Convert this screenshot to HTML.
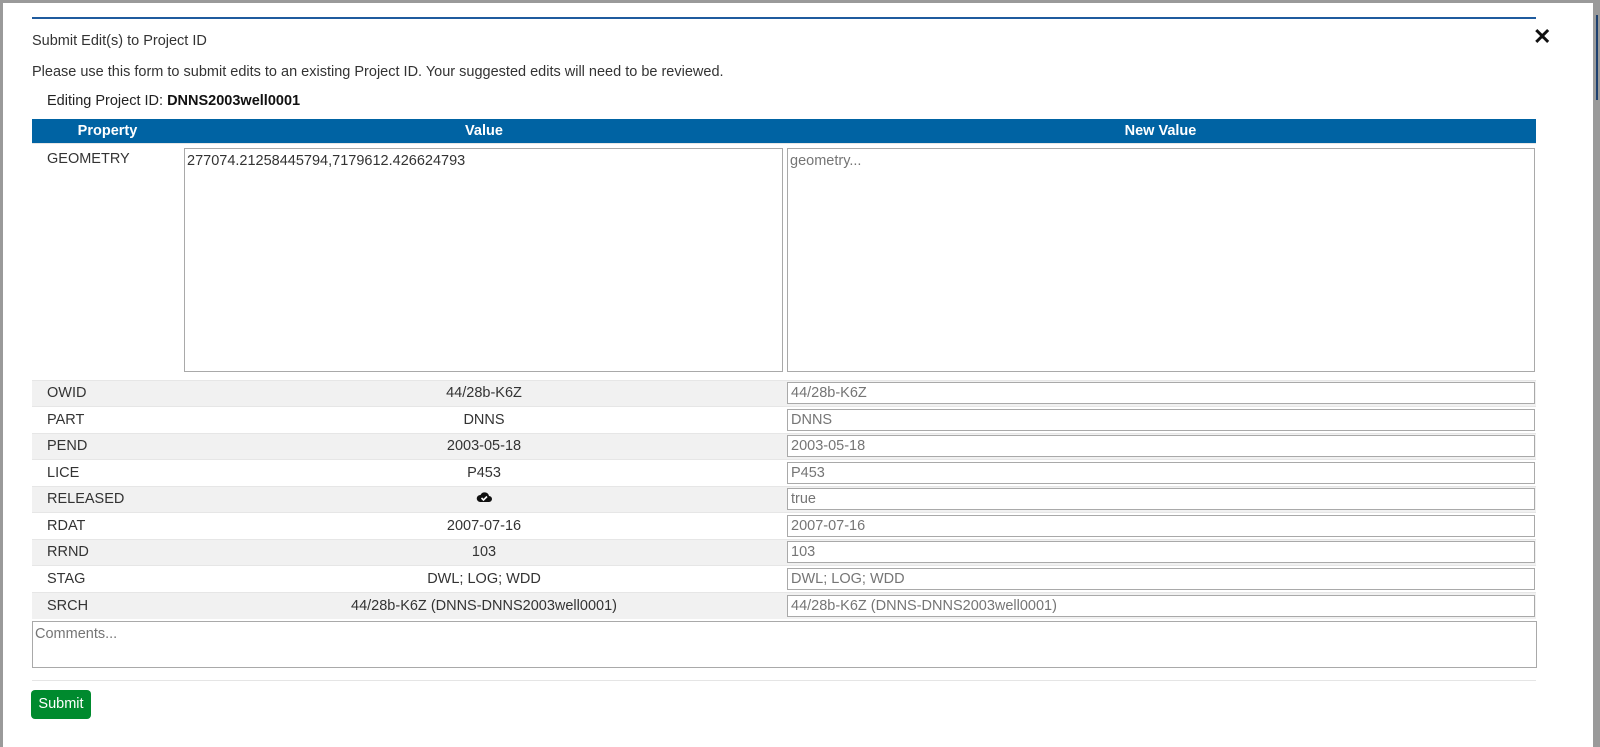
<!DOCTYPE html>
<html><head><meta charset="utf-8"><style>
*{box-sizing:border-box}
body{margin:0;width:1600px;height:747px;background:#9a9a9a;font-family:"Liberation Sans",Arial,sans-serif;font-size:14.5px;color:#333;overflow:hidden;position:relative}
.modal{position:absolute;left:3px;top:3px;width:1590px;height:744px;background:#fff}
.rstrip{position:absolute;left:1596px;top:15px;width:2px;height:85px;background:#1c3f6e}
.topline{position:absolute;left:32px;top:17px;width:1504px;height:2px;background:#1f5b9e}
.t{position:absolute;white-space:nowrap}
.x{position:absolute;left:1533px;top:24px;font-size:22px;font-weight:bold;color:#111}
table{position:absolute;left:32px;top:119px;width:1504px;border-collapse:collapse}
th{background:#0063a3;color:#fff;height:24px;font-size:14.5px;font-weight:bold;padding:0}
td{padding:0;height:26.5px;border-top:1px solid #e6e6e6}
tr.g td{background:#f1f1f1}
td.p{padding-left:15px;vertical-align:middle}
td.v{text-align:center}
.in{width:748px;height:22px;border:1px solid #a9a9a9;margin-left:2px;color:#757575;padding:2px 3px;font-size:14.5px;line-height:16px;background:#fff}
.ta{border:1px solid #a9a9a9;font-size:14.5px;padding:4px 2px;background:#fff;position:absolute}
.sub{position:absolute;left:31px;top:690px;width:60px;height:29px;background:#008a2e;color:#fff;border-radius:4px;font-size:14.5px;text-align:center;line-height:29px}
</style></head><body>
<div class="modal"></div>
<div class="rstrip"></div>
<div class="topline"></div>
<div class="t" style="left:32px;top:33px">Submit Edit(s) to Project ID</div>
<div class="x">✕</div>
<div class="t" style="left:32px;top:64px">Please use this form to submit edits to an existing Project ID. Your suggested edits will need to be reviewed.</div>
<div class="t" style="left:47px;top:93px;color:#222">Editing Project ID: <b style="color:#111">DNNS2003well0001</b></div>
<table>
<tr><th style="width:151px">Property</th><th style="width:602px">Value</th><th>New Value</th></tr>
<tr><td class="p" style="height:237px;vertical-align:top;padding-top:7px">GEOMETRY</td><td></td><td></td></tr>
<tr class="g"><td class="p">OWID</td><td class="v">44/28b-K6Z</td><td><div class="in">44/28b-K6Z</div></td></tr>
<tr><td class="p">PART</td><td class="v">DNNS</td><td><div class="in">DNNS</div></td></tr>
<tr class="g"><td class="p">PEND</td><td class="v">2003-05-18</td><td><div class="in">2003-05-18</div></td></tr>
<tr><td class="p">LICE</td><td class="v">P453</td><td><div class="in">P453</div></td></tr>
<tr class="g"><td class="p">RELEASED</td><td class="v"><svg width="16" height="12" viewBox="0 0 16 12"><path d="M4 11h9a3 3 0 0 0 0-6 4.5 4.5 0 0 0-8.5-1A3.5 3.5 0 0 0 4 11z" fill="#111"/><path d="M5.5 7l2 2 3.5-3.5" stroke="#fff" stroke-width="1.6" fill="none"/></svg></td><td><div class="in">true</div></td></tr>
<tr><td class="p">RDAT</td><td class="v">2007-07-16</td><td><div class="in">2007-07-16</div></td></tr>
<tr class="g"><td class="p">RRND</td><td class="v">103</td><td><div class="in">103</div></td></tr>
<tr><td class="p">STAG</td><td class="v">DWL; LOG; WDD</td><td><div class="in">DWL; LOG; WDD</div></td></tr>
<tr class="g"><td class="p">SRCH</td><td class="v">44/28b-K6Z (DNNS-DNNS2003well0001)</td><td><div class="in">44/28b-K6Z (DNNS-DNNS2003well0001)</div></td></tr>
</table>
<div class="ta" style="left:184px;top:148px;width:599px;height:224px;color:#333">277074.21258445794,7179612.426624793</div>
<div class="ta" style="left:787px;top:148px;width:748px;height:224px;color:#757575">geometry...</div>
<div class="ta" style="left:32px;top:621px;width:1505px;height:47px;color:#757575">Comments...</div>
<div style="position:absolute;left:32px;top:680px;width:1504px;height:1px;background:#e5e5e5"></div>
<div class="sub">Submit</div>
</body></html>
